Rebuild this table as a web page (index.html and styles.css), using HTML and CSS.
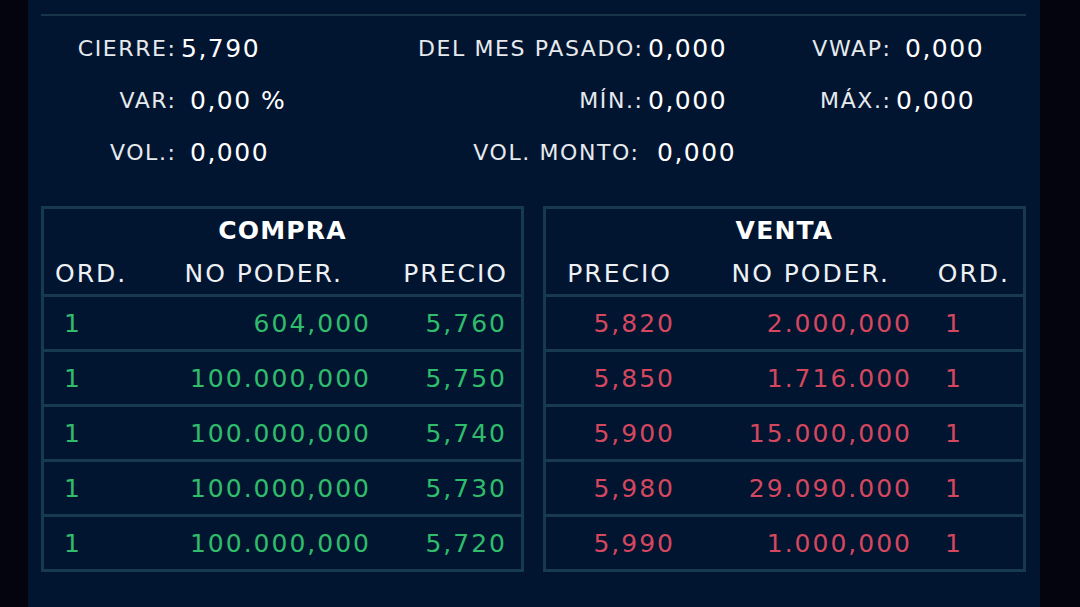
FILE: index.html
```html
<!DOCTYPE html>
<html lang="es">
<head>
  <meta charset="UTF-8" />
  <meta name="viewport" content="width=device-width, initial-scale=1.0"/>
  <title>Cotización</title>
  <link rel="stylesheet" href="styles.css">
</head>
<body>
  <div class="panel">
    <div class="rule"></div>

    <div class="stats">
      <span class="label">CIERRE:</span><span class="value">5,790</span>
      <span class="label">DEL MES PASADO:</span><span class="value">0,000</span>
      <span class="label">VWAP:</span><span class="value wide">0,000</span>

      <span class="label">VAR:</span><span class="value wide">0,00 %</span>
      <span class="label">MÍN.:</span><span class="value">0,000</span>
      <span class="label">MÁX.:</span><span class="value">0,000</span>

      <span class="label">VOL.:</span><span class="value wide">0,000</span>
      <span class="label short">VOL. MONTO:</span><span class="value wide">0,000</span>
      <span class="label"></span><span class="value"></span>
    </div>

    <div class="books">
      <div class="book buy">
        <div class="title">COMPRA</div>
        <div class="cols">
          <span>ORD.</span><span>NO PODER.</span><span>PRECIO</span>
        </div>
        <div class="row"><span>1</span><span>604,000</span><span>5,760</span></div>
        <div class="row"><span>1</span><span>100.000,000</span><span>5,750</span></div>
        <div class="row"><span>1</span><span>100.000,000</span><span>5,740</span></div>
        <div class="row"><span>1</span><span>100.000,000</span><span>5,730</span></div>
        <div class="row"><span>1</span><span>100.000,000</span><span>5,720</span></div>
      </div>

      <div class="book sell">
        <div class="title">VENTA</div>
        <div class="cols">
          <span>PRECIO</span><span>NO PODER.</span><span>ORD.</span>
        </div>
        <div class="row"><span>5,820</span><span>2.000,000</span><span>1</span></div>
        <div class="row"><span>5,850</span><span>1.716.000</span><span>1</span></div>
        <div class="row"><span>5,900</span><span>15.000,000</span><span>1</span></div>
        <div class="row"><span>5,980</span><span>29.090.000</span><span>1</span></div>
        <div class="row"><span>5,990</span><span>1.000,000</span><span>1</span></div>
      </div>
    </div>
  </div>
</body>
</html>
```

FILE: styles.css
```css
body {
  margin: 0;
  background-color: #03040e;
  font-family: "DejaVu Sans", sans-serif;
  color: #ffffff;
}

.panel {
  width: 985px;
  height: 607px;
  margin-left: 28px;
  padding: 14px 14px 0 13px;
  box-sizing: content-box;
  background-color: #011530;
  overflow: hidden;
}

.rule {
  height: 2px;
  background-color: #173449;
}

/* summary numbers */
.stats {
  display: grid;
  grid-template-columns: 134px 200px 267px 115px 133px 1fr;
  grid-auto-rows: 52px;
  margin-top: 6px;
  align-items: center;
}

.stats .label {
  text-align: right;
  font-size: 22px;
  letter-spacing: 1.6px;
  margin-right: -1.6px;
  color: #e6eaee;
}

.stats .label.short {
  padding-right: 4px;
}

.stats .value {
  padding-left: 6px;
  font-size: 25px;
  letter-spacing: 1.5px;
}

.stats .value.wide {
  padding-left: 15px;
}

/* order books */
.books {
  display: flex;
  gap: 19px;
  margin-top: 28px;
}

.book {
  flex: 1;
  border: 3px solid #183a4f;
  font-size: 25px;
  letter-spacing: 2px;
}

.book .title {
  height: 44px;
  line-height: 44px;
  text-align: center;
  font-weight: bold;
  letter-spacing: 1.2px;
}

.book .cols,
.book .row {
  display: grid;
  align-items: center;
}

.book .cols {
  height: 41px;
  color: #eef1f4;
}

.book .row {
  height: 52px;
  border-top: 3px solid #183a4f;
}

.buy .cols,
.buy .row {
  grid-template-columns: 106px 235px 1fr;
}

.buy .row {
  color: #2fbd6c;
}

.buy .cols span:nth-child(1) { padding-left: 11px; }
.buy .cols span:nth-child(2) { text-align: right; padding-right: 42px; }
.buy .cols span:nth-child(3) { text-align: right; padding-right: 13px; }

.buy .row span:nth-child(1) { padding-left: 20px; }
.buy .row span:nth-child(2) { text-align: right; padding-right: 14px; }
.buy .row span:nth-child(3) { text-align: right; padding-right: 14px; }

.sell .cols,
.sell .row {
  grid-template-columns: 144px 235px 1fr;
}

.sell .row {
  color: #d4475f;
}

.sell .cols span:nth-child(1) { text-align: right; padding-right: 18px; }
.sell .cols span:nth-child(2) { text-align: right; padding-right: 35px; }
.sell .cols span:nth-child(3) { text-align: right; padding-right: 13px; }

.sell .row span:nth-child(1) { text-align: right; padding-right: 15px; }
.sell .row span:nth-child(2) { text-align: right; padding-right: 13px; }
.sell .row span:nth-child(3) { padding-left: 20px; }
```
